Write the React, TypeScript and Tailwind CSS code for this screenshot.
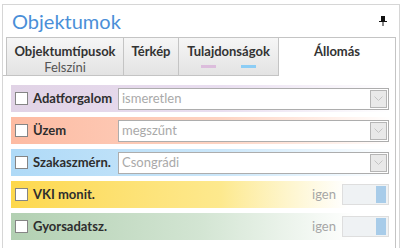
import React from "react";

interface Row {
  label: string;
  bg: string;
  kind: "select" | "toggle";
  value?: string;
}

const rows: Row[] = [
  { label: "Adatforgalom", bg: "bg-linear-to-r from-[#e1d3e6] via-[#e9def0] via-55% to-white", kind: "select", value: "ismeretlen" },
  { label: "Üzem", bg: "bg-linear-to-r from-[#fdbba2] via-[#fdd3c2] via-55% to-white", kind: "select", value: "megszűnt" },
  { label: "Szakaszmérn.", bg: "bg-linear-to-r from-[#afdaf7] via-[#cbe7fa] via-55% to-white", kind: "select", value: "Csongrádi" },
  { label: "VKI monit.", bg: "bg-linear-to-r from-[#fdd84c] via-[#fde98e] via-55% to-white to-88%", kind: "toggle" },
  { label: "Gyorsadatsz.", bg: "bg-linear-to-r from-[#b2d0b2] via-[#d3e5d3] via-50% to-white to-90%", kind: "toggle" },
];

function Pin() {
  return (
    <svg width="8" height="10" viewBox="0 0 8 10">
      <rect x="2" y="0" width="4" height="5" fill="#111" />
      <rect x="0" y="5" width="8" height="1" fill="#111" />
      <rect x="3.5" y="6" width="1" height="4" fill="#111" />
    </svg>
  );
}

function Chevron() {
  return (
    <svg width="9" height="6" viewBox="0 0 9 6">
      <polyline points="0.5,0.5 4.5,4.5 8.5,0.5" fill="none" stroke="#c4c4c4" strokeWidth="1" />
    </svg>
  );
}

function FieldRow({ row }: { row: Row }) {
  return (
    <div className={`h-[27px] flex items-center pl-[4px] pr-[4px] ${row.bg}`}>
      <div className="w-[13px] h-[13px] border border-[#858585] bg-white shrink-0" />
      <div className="ml-[5px] w-[85px] shrink-0 text-[13px] font-bold text-[#2e2e2e] whitespace-nowrap">{row.label}</div>
      {row.kind === "select" ? (
        <div className="flex-1 h-[22px] border border-[#adadad] bg-white flex items-center justify-between pl-[3px] pr-px">
          <span className="text-[13px] text-[#a9a9a9]">{row.value}</span>
          <div className="w-[17px] h-[18px] border border-[#b5b5b5] bg-[#e9e9e9] flex items-center justify-center">
            <Chevron />
          </div>
        </div>
      ) : (
        <div className="flex-1 flex items-center justify-end">
          <span className="text-[13px] text-[#a6a6a6] mr-[6px]">igen</span>
          <div className="w-[47px] h-[21px] border border-[#dedede] bg-[#eff2f4] flex justify-end py-px pr-[2px]">
            <div className="w-[10px] h-full bg-[#a8cce9]" />
          </div>
        </div>
      )}
    </div>
  );
}

export default function App() {
  return (
    <div className="w-[400px] h-[248px] overflow-hidden bg-white pt-[4px] pl-[2px] font-['Lato',sans-serif]">
      <div className="w-[398px] h-[244px] border border-b-0 border-[#d6d6d6] flex flex-col">
        {/* header */}
        <div className="h-[32px] flex items-center justify-between pl-[9px] pr-[12px] shrink-0">
          <span className="text-[20px] leading-none text-[#4a8fd8]">Objektumok</span>
          <Pin />
        </div>

        {/* tabs */}
        <div className="h-[39px] flex shrink-0 text-[13px] leading-[16px] text-[#333]">
          <div className="w-[3px] border-b border-[#c4c4c4]" />
          <div className="w-[117px] border-l border-t border-b border-[#c4c4c4] bg-linear-to-b from-[#f6f6f6] to-[#e3e3e3] flex flex-col items-center pt-[5px]">
            <span className="font-bold">Objektumtípusok</span>
            <span className="text-[#555]">Felszíni</span>
          </div>
          <div className="w-[55px] border-l border-t border-b border-[#c4c4c4] bg-linear-to-b from-[#f6f6f6] to-[#e3e3e3] flex flex-col items-center pt-[5px]">
            <span className="font-bold">Térkép</span>
          </div>
          <div className="w-[100px] border-l border-t border-b border-[#c4c4c4] bg-linear-to-b from-[#f6f6f6] to-[#e3e3e3] flex flex-col items-center pt-[5px]">
            <span className="font-bold">Tulajdonságok</span>
            <div className="flex gap-[25px] mt-[6px]">
              <div className="w-[15px] h-[3px] bg-[#dcbddc]" />
              <div className="w-[15px] h-[3px] bg-[#8ccdf5]" />
            </div>
          </div>
          <div className="w-[118px] border-l border-t border-r border-[#c4c4c4] bg-white flex flex-col items-center pt-[5px]">
            <span className="font-bold">Állomás</span>
          </div>
        </div>

        {/* content */}
        <div className="flex-1 mr-[3px] border-r border-[#c4c4c4] pl-[8px] pr-[2px] pt-[9px] flex flex-col gap-[5px]">
          {rows.map((r) => (
            <FieldRow key={r.label} row={r} />
          ))}
        </div>
      </div>
    </div>
  );
}
